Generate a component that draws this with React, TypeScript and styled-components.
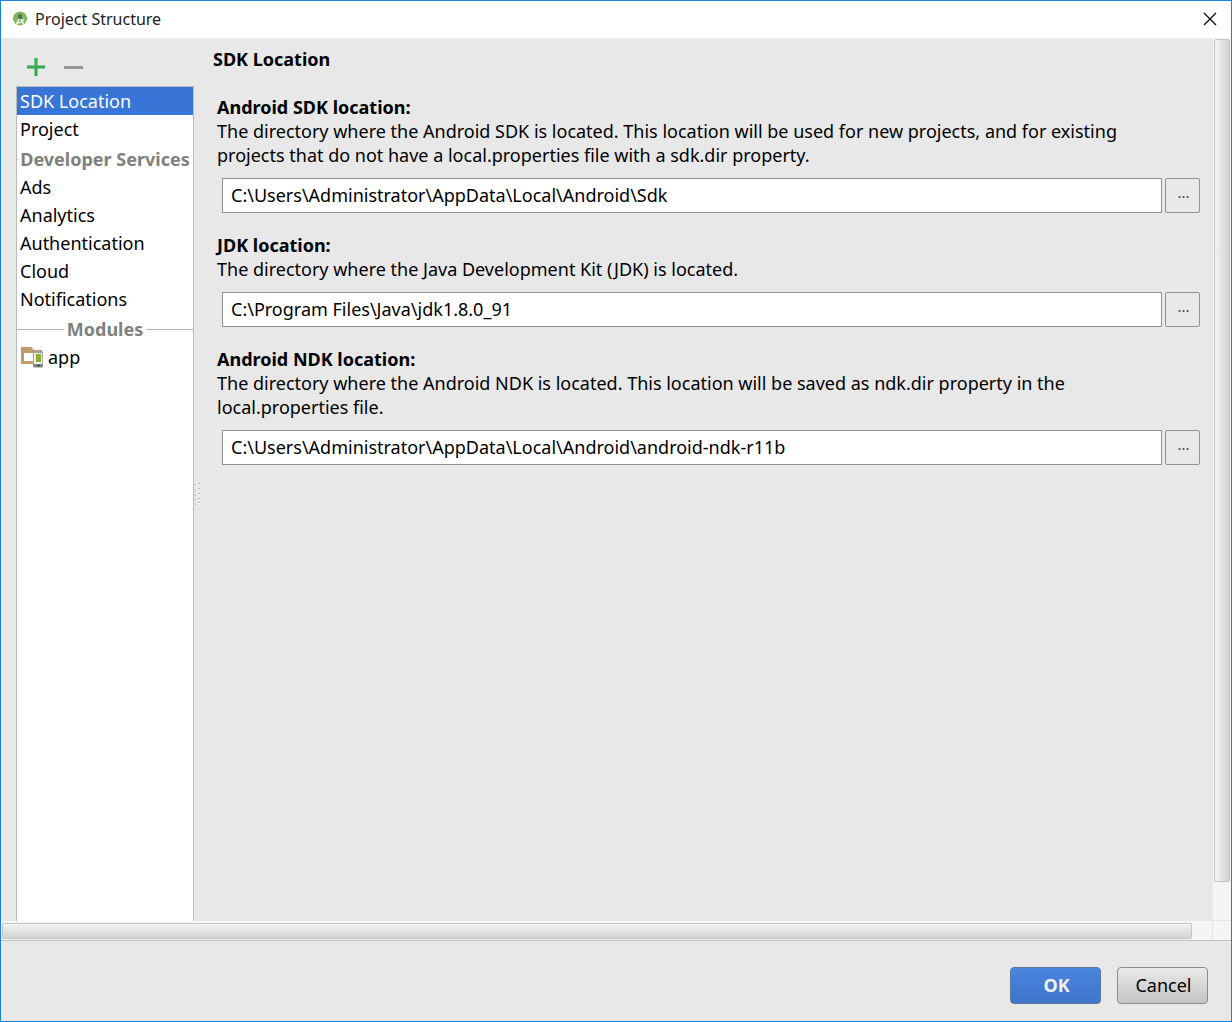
import React, { useId, useState } from "react";
import styled, { createGlobalStyle, css } from "styled-components";

const GlobalStyle = createGlobalStyle`
  *, *::before, *::after { box-sizing: border-box; }
  body {
    margin: 0;
    background: #e8e8e8;
    color: #000;
    font-family: "Noto Sans", "Open Sans", sans-serif;
    font-size: 18px;
    line-height: 24px;
  }
  button, input { font: inherit; color: inherit; }
`;

const Window = styled.div`
  display: flex;
  flex-direction: column;
  min-height: 100vh;
  border: 1px solid #1883d7;
  background: #e8e8e8;
`;

const TitleBar = styled.header`
  display: flex;
  align-items: center;
  gap: 6px;
  height: 37px;
  padding: 0 11px 2px 10px;
  background: #fff;
`;

const WindowTitle = styled.h1`
  flex: 1;
  margin: 0;
  font-size: 16px;
  font-weight: 400;
  color: #222;
`;

const IconButton = styled.button`
  display: flex;
  align-items: center;
  justify-content: center;
  width: 20px;
  height: 20px;
  padding: 0;
  border: 0;
  background: none;
`;

const Workspace = styled.div`
  flex: 1;
  display: grid;
  grid-template-columns: minmax(0, 1fr) 18px;
  grid-template-rows: minmax(0, 1fr) 19px;
`;

const Panes = styled.div`
  display: grid;
  grid-template-columns: 178px 7px minmax(0, 1fr);
  padding-left: 15px;
`;

const Sidebar = styled.aside`
  display: flex;
  flex-direction: column;
`;

const Toolbar = styled.div`
  display: flex;
  align-items: center;
  gap: 18px;
  height: 48px;
  padding: 10px 10px 0;
`;

const Sections = styled.nav`
  flex: 1;
  border: 1px solid #bbb;
  border-bottom: 0;
  background: #fff;
`;

const SectionItem = styled.button<{ $selected: boolean }>`
  display: flex;
  align-items: center;
  gap: 4px;
  width: 100%;
  height: 28px;
  padding: 0 3px;
  border: 0;
  background: ${(p) => (p.$selected ? "#3875d7" : "transparent")};
  color: ${(p) => (p.$selected ? "#fff" : "#000")};
  text-align: left;
`;

const GroupHeading = styled.h2`
  display: flex;
  align-items: center;
  gap: 3px;
  height: 30px;
  margin: 0;
  padding-top: 2px;
  font-size: 18px;
  font-weight: 700;
  color: #808080;
  white-space: nowrap;
  &::before, &::after {
    content: "";
    flex: 1;
    height: 1px;
    background: #b4b4b4;
  }
`;

const Splitter = styled.div`
  display: flex;
  align-items: center;
  justify-content: center;
  padding-top: 28px;
`;

const Content = styled.main`
  padding: 9px 13px 24px 12px;
`;

const PageTitle = styled.h2`
  margin: 0 0 24px;
  font-size: 18px;
  line-height: 24px;
`;

const LocationGroup = styled.section`
  margin-bottom: 20px;
  padding-left: 4px;
`;

const LocationLabel = styled.label`
  display: block;
  font-weight: 700;
`;

const Description = styled.p`
  margin: 0 0 11px;
  padding-right: 32px;
`;

const PathRow = styled.div`
  display: flex;
  gap: 3px;
  padding-left: 5px;
`;

const PathInput = styled.input`
  flex: 1;
  min-width: 0;
  height: 35px;
  padding: 0 8px 2px;
  border: 1px solid #939393;
  background: #fff;
`;

const BrowseButton = styled.button`
  width: 35px;
  height: 35px;
  padding: 0 0 7px 2px;
  border: 1px solid #939393;
  border-radius: 2px;
  background: #e8e8e8;
  color: #444;
  font-size: 15px;
  line-height: 24px;
`;

const Track = styled.div<{ $vertical?: boolean }>`
  display: flex;
  background: #f5f5f5;
  ${(p) =>
    p.$vertical
      ? css`
          flex-direction: column;
          padding: 1px 1px 38px;
          border-bottom: 1px solid #e4e4e4;
        `
      : css`
          padding: 2px 20px 1px 1px;
          border-right: 1px solid #e4e4e4;
        `}
`;

const Thumb = styled.div<{ $vertical?: boolean }>`
  flex: 1;
  border: 1px solid #c4c4c4;
  border-radius: 2px;
  background: linear-gradient(${(p) => (p.$vertical ? "to right" : "to bottom")}, #f3f3f3, #d2d2d2);
`;

const Corner = styled.div`
  background: #f5f5f5;
`;

const Footer = styled.footer`
  display: flex;
  justify-content: flex-end;
  gap: 16px;
  padding: 26px 23px 17px;
  border-top: 1px solid #c0c0c0;
`;

const DialogButton = styled.button<{ $primary?: boolean }>`
  width: 91px;
  height: 37px;
  padding: 0 0 2px 2px;
  border: 1px solid ${(p) => (p.$primary ? "#5f7599" : "#8c8c8c")};
  border-radius: 4px;
  background: ${(p) =>
    p.$primary ? "linear-gradient(#4a85e0, #3f74cc)" : "linear-gradient(#e9e9e9, #c4c4c4)"};
  color: ${(p) => (p.$primary ? "#f0f0f0" : "#000")};
  font-weight: ${(p) => (p.$primary ? 700 : 400)};
`;

const StudioLogo = () => (
  <svg width="18" height="18" viewBox="0 0 18 18" aria-hidden="true">
    <circle cx="9" cy="8.5" r="7" fill="#7cb950" />
    <path d="M7 8V6a2 2 0 0 1 4 0v2L9 10z" fill="#59685b" />
    <path d="M8.2 9 4.5 16M9.8 9l3.7 7M5.5 12c2 1.6 5.4 1 7.5-2.7" fill="none" stroke="#f0f3ef" strokeWidth="1.5" />
  </svg>
);

const CloseIcon = () => (
  <svg width="14" height="14" viewBox="0 0 14 14" aria-hidden="true">
    <path d="M1 1l12 12M13 1 1 13" stroke="#000" strokeWidth="1.2" />
  </svg>
);

const AddIcon = () => (
  <svg width="20" height="20" viewBox="0 0 20 20" aria-hidden="true">
    <path d="M8.5 1h3v7.5H19v3h-7.5V19h-3v-7.5H1v-3h7.5z" fill="#2fa84c" />
    <path d="M8.5 1h1v8.5H1v-1h7.5z" fill="#5cc476" />
  </svg>
);

const RemoveIcon = () => (
  <svg width="20" height="20" viewBox="0 0 20 20" aria-hidden="true">
    <path d="M0 9h19v3H0z" fill="#969696" />
  </svg>
);

const ModuleIcon = () => (
  <svg width="24" height="22" viewBox="0 0 24 22" aria-hidden="true">
    <path d="M1 1h10l3 3h8v14H1z" fill="#c39a6b" />
    <path d="M4 7h9v8H4z" fill="#fff" />
    <rect x="13" y="5" width="10" height="16" rx="1.5" fill="#a0a0a0" />
    <path d="M14 7h8v11h-8z" fill="#eee" />
    <path d="M16 8h5v8h-5z" fill="#8fae2e" />
    <path d="M13 18h10v2q0 1.5-1.5 1.5h-7q-1.5 0-1.5-1.5z" fill="#868686" />
    <path d="M17 19h3v1.2h-3z" fill="#333" />
  </svg>
);

const GripIcon = () => (
  <svg width="7" height="24" viewBox="0 0 7 24" aria-hidden="true">
    {[2, 7, 12, 17, 21].map((y) => (
      <g key={y}>
        <path d={`M1 ${y}h2v2H1zM4 ${y - 1}h2v2H4z`} fill="#f6f6f6" />
        <path d={`M1 ${y}h1v2H1zM4 ${y - 1}h2v1H4z`} fill="#b6b6b6" />
      </g>
    ))}
  </svg>
);

const general = ["SDK Location", "Project"];
const services = ["Ads", "Analytics", "Authentication", "Cloud", "Notifications"];

const locations = [
  {
    label: "Android SDK location:",
    description:
      "The directory where the Android SDK is located. This location will be used for new projects, and for existing projects that do not have a local.properties file with a sdk.dir property.",
    path: "C:\\Users\\Administrator\\AppData\\Local\\Android\\Sdk",
  },
  {
    label: "JDK location:",
    description: "The directory where the Java Development Kit (JDK) is located.",
    path: "C:\\Program Files\\Java\\jdk1.8.0_91",
  },
  {
    label: "Android NDK location:",
    description:
      "The directory where the Android NDK is located. This location will be saved as ndk.dir property in the local.properties file.",
    path: "C:\\Users\\Administrator\\AppData\\Local\\Android\\android-ndk-r11b",
  },
];

function LocationField({ label, description, path }: (typeof locations)[number]) {
  const id = useId();
  return (
    <LocationGroup>
      <LocationLabel htmlFor={id}>{label}</LocationLabel>
      <Description>{description}</Description>
      <PathRow>
        <PathInput id={id} type="text" defaultValue={path} spellCheck={false} />
        <BrowseButton type="button" aria-label="Browse">...</BrowseButton>
      </PathRow>
    </LocationGroup>
  );
}

export default function App() {
  const [selected, setSelected] = useState("SDK Location");
  const item = (name: string, icon?: React.ReactNode) => (
    <SectionItem key={name} type="button" $selected={selected === name} onClick={() => setSelected(name)}>
      {icon}
      {name}
    </SectionItem>
  );

  return (
    <>
      <GlobalStyle />
      <Window>
        <TitleBar>
          <StudioLogo />
          <WindowTitle>Project Structure</WindowTitle>
          <IconButton type="button" aria-label="Close"><CloseIcon /></IconButton>
        </TitleBar>
        <Workspace>
          <Panes>
            <Sidebar>
              <Toolbar>
                <IconButton type="button" aria-label="Add module"><AddIcon /></IconButton>
                <IconButton type="button" aria-label="Remove module"><RemoveIcon /></IconButton>
              </Toolbar>
              <Sections>
                {general.map((name) => item(name))}
                <GroupHeading>Developer Services</GroupHeading>
                {services.map((name) => item(name))}
                <GroupHeading>Modules</GroupHeading>
                {item("app", <ModuleIcon />)}
              </Sections>
            </Sidebar>
            <Splitter><GripIcon /></Splitter>
            <Content>
              <PageTitle>SDK Location</PageTitle>
              {locations.map((location) => (
                <LocationField key={location.label} {...location} />
              ))}
            </Content>
          </Panes>
          <Track $vertical><Thumb $vertical /></Track>
          <Track><Thumb /></Track>
          <Corner />
        </Workspace>
        <Footer>
          <DialogButton type="button" $primary>OK</DialogButton>
          <DialogButton type="button">Cancel</DialogButton>
        </Footer>
      </Window>
    </>
  );
}
